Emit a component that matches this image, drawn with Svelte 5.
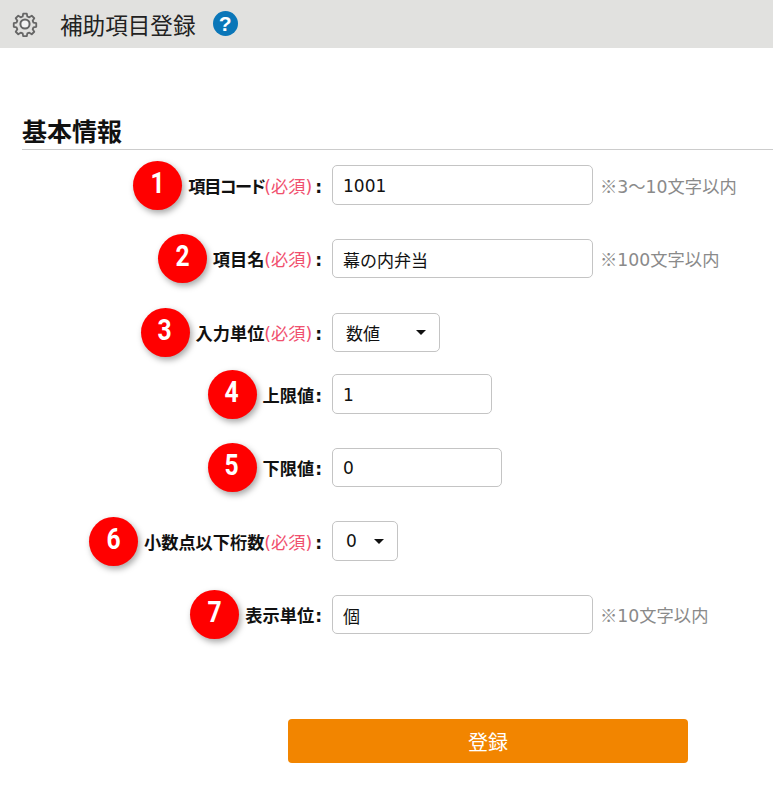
<script>
  const rows = [
    { n: 1, label: "項目コード", kana: true, req: true, type: "input", value: "1001", width: 261, note: "3〜10文字以内", h: 40, gap: 34 },
    { n: 2, label: "項目名", req: true, type: "input", value: "幕の内弁当", width: 261, note: "100文字以内", h: 39, gap: 35 },
    { n: 3, label: "入力単位", req: true, type: "select", value: "数値", width: 108, h: 39, gap: 22 },
    { n: 4, label: "上限値", type: "input", value: "1", width: 160, h: 40, gap: 34 },
    { n: 5, label: "下限値", type: "input", value: "0", width: 170, h: 39, gap: 34 },
    { n: 6, label: "小数点以下桁数", req: true, type: "select", value: "0", width: 66, h: 40, gap: 34 },
    { n: 7, label: "表示単位", type: "input", value: "個", width: 261, note: "10文字以内", h: 39, gap: 0 },
  ];
</script>

<div class="page">
  <header class="topbar">
    <svg class="gear" viewBox="0 0 26 26" width="26" height="26" fill="none" stroke="#666" stroke-width="2" stroke-linejoin="round">
      <path d="M11 1.5h4l.6 3.2 2.2.9 2.7-1.8 2.8 2.8-1.8 2.7.9 2.2 3.1.6v4l-3.1.6-.9 2.2 1.8 2.7-2.8 2.8-2.7-1.8-2.2.9-.6 3h-4l-.6-3-2.2-.9-2.7 1.8-2.8-2.8 1.8-2.7-.9-2.2-3.1-.6v-4l3.1-.6.9-2.2-1.8-2.7 2.8-2.8 2.7 1.8 2.2-.9z" transform="translate(1.3 1.3) scale(0.9)" />
      <circle cx="13" cy="13" r="4.6" fill="#f4f4f4" />
    </svg>
    <h1>補助項目登録</h1>
    <span class="help">?</span>
  </header>

  <section class="basic">
    <h2>基本情報</h2>
    <form class="rows" on:submit|preventDefault>
      {#each rows as row}
        <div class="row" style="height: {row.h}px; margin-bottom: {row.gap}px">
          <div class="label">
            <span class="badge"><span class="digit">{row.n}</span></span>
            <label for="f{row.n}"><b class:kana={row.kana}>{row.label}</b>{#if row.req}<span class="req">(必須)</span>{/if}<b class="colon">:</b></label>
          </div>
          {#if row.type === "input"}
            <input id="f{row.n}" class="field" style="width: {row.width}px" value={row.value} />
          {:else}
            <div class="select" style="width: {row.width}px">
              <span>{row.value}</span>
              <i class="caret"></i>
            </div>
          {/if}
          {#if row.note}
            <span class="note"><span class="mark">※</span>{row.note}</span>
          {/if}
        </div>
      {/each}
      <button type="submit" class="submit">登録</button>
    </form>
  </section>
</div>

<style>
  :global(body) {
    background: #fff;
    font-family: "DejaVu Sans", "Noto Sans CJK JP", sans-serif;
    color: #111;
  }

  .page {
    height: 791px;
    overflow: hidden;
  }

  .topbar {
    height: 48px;
    background: #e1e1df;
    display: flex;
    align-items: center;
    padding-left: 12px;
    box-sizing: border-box;
  }

  .gear {
    flex: none;
  }

  h1 {
    margin: 0 0 0 22px;
    font-family: "Noto Sans CJK JP", sans-serif;
    font-size: 22.6px;
    font-weight: 400;
    color: #222;
  }

  .help {
    width: 25px;
    height: 25px;
    border-radius: 50%;
    background: #0a76b8;
    color: #fff;
    font: 700 21px/25px "Liberation Sans", sans-serif;
    text-align: center;
    margin: -1px 0 0 17px;
  }

  .basic {
    padding-left: 22px;
  }

  h2 {
    margin: 0;
    padding-top: 66px;
    height: 35px;
    font-family: "Noto Sans CJK JP", sans-serif;
    font-size: 25px;
    line-height: 33px;
    font-weight: 700;
    border-bottom: 1px solid #ccc;
    box-sizing: content-box;
  }

  .rows {
    padding-top: 15px;
  }

  .row {
    display: flex;
    align-items: stretch;
  }

  .label {
    width: 300px;
    flex: none;
    display: flex;
    justify-content: flex-end;
    align-items: center;
    margin-right: 10px;
    font-size: 17.2px;
    white-space: nowrap;
  }

  .label b {
    font-weight: 700;
  }

  .label .kana {
    font-feature-settings: "palt";
    letter-spacing: -1.4px;
  }

  .colon {
    margin-left: 1px;
  }

  .req {
    color: #f0506e;
    font-weight: 400;
    margin-right: 2px;
  }

  .badge {
    width: 49px;
    height: 49px;
    flex: none;
    margin: -5px 6px -5px 0;
    border-radius: 50%;
    background: #f00;
    color: #fff;
    font: 700 30px/44px Roboto, sans-serif;
    text-align: center;
    box-shadow: 2px 3px 6px rgba(0, 0, 0, 0.35);
  }

  .digit {
    display: inline-block;
    transform: scaleX(0.82);
  }

  .field,
  .select {
    box-sizing: border-box;
    border: 1px solid #c4c4c4;
    border-radius: 5px;
    background: #fff;
    font-family: inherit;
    font-size: 17px;
    color: #111;
    flex: none;
  }

  .field {
    padding: 1px 10px 0;
    outline: none;
  }

  .select {
    display: flex;
    align-items: center;
    justify-content: space-between;
    padding: 0 13px;
  }

  .caret {
    width: 0;
    height: 0;
    border-left: 5px solid transparent;
    border-right: 5px solid transparent;
    border-top: 5px solid #111;
  }

  .note {
    align-self: center;
    margin-left: 7px;
    font-size: 17.3px;
    color: #8a8a8a;
  }

  .mark {
    font-family: "Noto Sans CJK JP", sans-serif;
  }

  .submit {
    display: block;
    width: 400px;
    height: 44px;
    margin: 85px 0 0 266px;
    background: #f28500;
    border: 0;
    border-radius: 4px;
    color: #fff;
    font-family: "Noto Sans CJK JP", sans-serif;
    font-size: 20px;
  }
</style>
